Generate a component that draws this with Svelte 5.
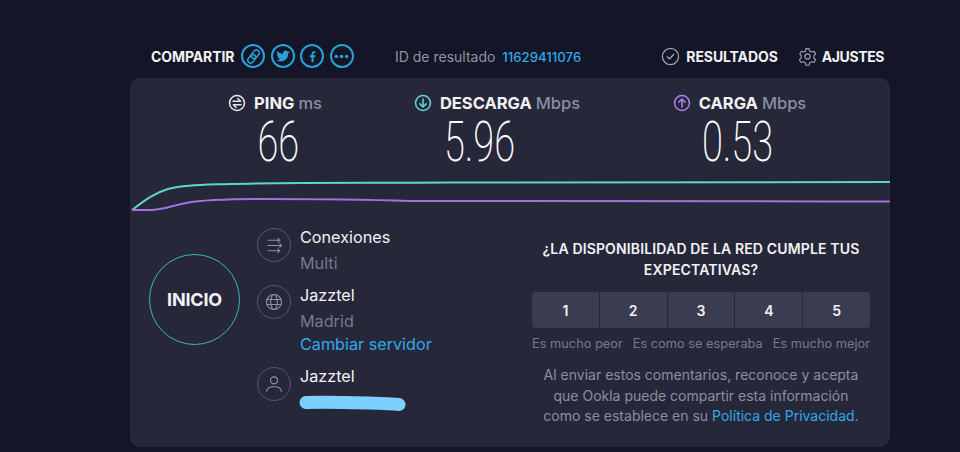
<script>
  const scale = [1, 2, 3, 4, 5];
</script>

<div class="page">
  <header class="top">
    <div class="share">
      <span class="head-label">COMPARTIR</span>
      <span class="round">
        <svg viewBox="0 0 24 24" width="17" height="17" fill="none" stroke="#2a9fd8" stroke-width="2.200">
          <g transform="rotate(-52 12 12)">
            <rect x="1.500" y="8" width="13" height="8" rx="4" />
            <rect x="9.500" y="8" width="13" height="8" rx="4" />
          </g>
        </svg>
      </span>
      <span class="round">
        <svg viewBox="0 0 24 24" width="16" height="16" fill="#2a9fd8">
          <path d="M22 5.900c-.8.300-1.500.500-2.400.600.900-.500 1.500-1.300 1.800-2.300-.800.500-1.700.800-2.600 1a4.100 4.100 0 0 0-7 3.700C8.400 8.700 5.400 7.100 3.400 4.600c-1.100 1.900-.500 4.300 1.300 5.500-.700 0-1.300-.200-1.900-.500 0 2 1.400 3.700 3.300 4.100-.600.200-1.200.200-1.800.100.500 1.600 2 2.800 3.800 2.800A8.300 8.300 0 0 1 2 18.300 11.600 11.600 0 0 0 19.900 8c.800-.600 1.500-1.300 2.100-2.100z" />
        </svg>
      </span>
      <span class="round">
        <svg viewBox="0 0 24 24" width="15" height="15" fill="#2a9fd8">
          <path d="M13.600 21v-8h2.700l.400-3.100h-3.100V8c0-.900.300-1.500 1.600-1.500h1.600V3.700c-.300 0-1.300-.100-2.400-.100-2.400 0-4 1.400-4 4.100v2.200H7.700V13h2.700v8z" />
        </svg>
      </span>
      <span class="round">
        <svg viewBox="0 0 24 24" width="19" height="19" fill="#2a9fd8">
          <circle cx="5.500" cy="12" r="2.300" /><circle cx="12" cy="12" r="2.300" /><circle cx="18.500" cy="12" r="2.300" />
        </svg>
      </span>
    </div>
    <div class="result-id">ID de resultado <a href="#top">11629411076</a></div>
    <div class="head-links">
      <span class="head-link">
        <svg viewBox="0 0 20 20" width="19" height="19" fill="none" stroke="#a0a2b2" stroke-width="1.300">
          <circle cx="10" cy="10" r="8.500" />
          <path d="M6.500 10.300l2.500 2.300 4.500-5" stroke-linecap="round" stroke-linejoin="round" />
        </svg>
        <span class="head-label">RESULTADOS</span>
      </span>
      <span class="head-link settings">
        <svg viewBox="0 0 24 24" width="19" height="19" fill="none" stroke="#a0a2b2" stroke-width="1.400" stroke-linejoin="round">
          <circle cx="12" cy="12" r="3.300" />
          <path d="M10 2h4l.7 3 2.500 1.400 3-.9 2 3.500-2.200 2.100v2.800l2.200 2.100-2 3.500-3-.9-2.500 1.400-.7 3h-4l-.7-3-2.500-1.400-3 .9-2-3.500 2.200-2.100V11L2.300 8.900l2-3.500 3 .9L9.800 5z" />
        </svg>
        <span class="head-label">AJUSTES</span>
      </span>
    </div>
  </header>

  <main class="card">
    <section class="stats">
      <div class="stat ping">
        <div class="stat-title">
          <svg viewBox="0 0 20 20" width="18" height="18" fill="none" stroke="#e4e4ea" stroke-width="1.700" stroke-linecap="round" stroke-linejoin="round">
            <circle cx="10" cy="10" r="8.300" />
            <path d="M5.500 8h8.500L11 5M14.500 12H6l3 3" />
          </svg>
          <b>PING</b> <span>ms</span>
        </div>
        <div class="value"><span>66</span></div>
      </div>
      <div class="stat down">
        <div class="stat-title">
          <svg viewBox="0 0 20 20" width="18" height="18" fill="none" stroke="#5fd8d2" stroke-width="1.700" stroke-linecap="round" stroke-linejoin="round">
            <circle cx="10" cy="10" r="8.300" />
            <path d="M10 5.500v9M6.500 11l3.500 3.500 3.500-3.500" />
          </svg>
          <b>DESCARGA</b> <span>Mbps</span>
        </div>
        <div class="value"><span>5.96</span></div>
      </div>
      <div class="stat up">
        <div class="stat-title">
          <svg viewBox="0 0 20 20" width="18" height="18" fill="none" stroke="#b27fe8" stroke-width="1.700" stroke-linecap="round" stroke-linejoin="round">
            <circle cx="10" cy="10" r="8.300" />
            <path d="M10 14.500v-9M6.500 9L10 5.500 13.500 9" />
          </svg>
          <b>CARGA</b> <span>Mbps</span>
        </div>
        <div class="value"><span>0.53</span></div>
      </div>
    </section>

    <svg class="graph" viewBox="0 0 760 40" preserveAspectRatio="none" width="760" height="40" fill="none" stroke-width="2">
      <path stroke="#5fd3cf" d="M2 33C14 24 24 16 38 12C52 8 70 8 100 7C160 5 240 6 320 5.500C460 5 600 5 760 5" />
      <path stroke="#a76fdd" d="M2 33H20C34 33 40 29 56 26C72 23 90 22 130 22C190 22 220 22 280 24C340 25 560 24 760 24.500" />
    </svg>

    <section class="bottom">
      <div class="start"><span>INICIO</span></div>

      <div class="info">
        <div class="info-row conn">
          <span class="info-icon">
            <svg viewBox="0 0 24 24" width="21" height="21" fill="none" stroke="#8f91a3" stroke-width="1.200">
              <path d="M4 6h14M15.500 3.500L18 6l-2.500 2.500M4 12h16M17.500 9.500L20 12l-2.500 2.500M4 18h14M15.500 15.500L18 18l-2.500 2.500" />
            </svg>
          </span>
          <div class="info-text">
            <div class="line">Conexiones</div>
            <div class="line dim">Multi</div>
          </div>
        </div>
        <div class="info-row server">
          <span class="info-icon">
            <svg viewBox="0 0 24 24" width="20" height="20" fill="none" stroke="#8f91a3" stroke-width="1.300">
              <circle cx="12" cy="12" r="9" />
              <ellipse cx="12" cy="12" rx="4" ry="9" />
              <path d="M3 9h18M3 15h18" />
            </svg>
          </span>
          <div class="info-text">
            <div class="line">Jazztel</div>
            <div class="line dim">Madrid</div>
            <a class="line change" href="#top">Cambiar servidor</a>
          </div>
        </div>
        <div class="info-row isp">
          <span class="info-icon">
            <svg viewBox="0 0 24 24" width="22" height="22" fill="none" stroke="#8f91a3" stroke-width="1.300" stroke-linecap="round">
              <circle cx="12" cy="8" r="3.800" />
              <path d="M4 20c0-3.500 3-5 8-5s8 1.500 8 5" />
            </svg>
          </span>
          <div class="info-text">
            <div class="line">Jazztel</div>
            <div class="line dim masked">
              <svg class="scribble" viewBox="0 0 108 22" width="108" height="22" fill="none" stroke="#7cd0ff" stroke-width="13" stroke-linecap="round">
                <path d="M7 10.500C25 10 50 10.500 70 11C85 11.500 95 12 100 12.500" />
              </svg>
            </div>
          </div>
        </div>
      </div>

      <div class="survey">
        <h2>¿LA DISPONIBILIDAD DE LA RED CUMPLE TUS EXPECTATIVAS?</h2>
        <div class="scale">
          {#each scale as n}
            <button>{n}</button>
          {/each}
        </div>
        <div class="scale-labels">
          <span>Es mucho peor</span>
          <span>Es como se esperaba</span>
          <span>Es mucho mejor</span>
        </div>
        <p>Al enviar estos comentarios, reconoce y acepta que Ookla puede compartir esta información como se establece en su <a href="#top">Política de Privacidad</a>.</p>
      </div>
    </section>
  </main>
</div>

<style>
  :global(body) {
    margin: 0;
    background: #141526;
  }

  .page {
    width: 960px;
    height: 452px;
    overflow: hidden;
    box-sizing: border-box;
    padding: 42px 70px 0 130px;
    font-family: Inter, "Noto Sans", sans-serif;
    color: #f2f2f5;
  }

  a {
    color: #2fa8e8;
    text-decoration: none;
  }

  .top {
    display: flex;
    align-items: center;
    height: 28px;
    margin-bottom: 8px;
    padding-left: 21px;
    padding-right: 6px;
  }

  .share {
    display: flex;
    align-items: center;
    gap: 5.500px;
    width: 244px;
    flex: none;
  }

  .head-label {
    font-size: 14px;
    font-weight: 700;
    letter-spacing: -0.1px;
  }

  .share .head-label {
    margin-right: 1.500px;
  }

  .round {
    width: 24px;
    height: 24px;
    box-sizing: border-box;
    border: 2px solid #2a9fd8;
    border-radius: 50%;
    display: flex;
    align-items: center;
    justify-content: center;
    flex: none;
  }

  .result-id {
    font-size: 14px;
    color: #9193a8;
    white-space: nowrap;
  }

  .result-id a {
    font-size: 13.200px;
    font-weight: 500;
    margin-left: 3px;
  }

  .head-links {
    margin-left: auto;
    display: flex;
    align-items: center;
    gap: 20px;
  }

  .head-link {
    display: flex;
    align-items: center;
    gap: 6px;
  }

  .settings {
    gap: 5px;
  }

  .settings .head-label {
    letter-spacing: -0.4px;
  }

  .card {
    height: 369px;
    background: #26283a;
    border-radius: 10px;
    display: flex;
    flex-direction: column;
  }

  .stats {
    display: flex;
    height: 100px;
    padding: 15px 0 0 60px;
    box-sizing: border-box;
    flex: none;
  }

  .stat {
    display: flex;
    flex-direction: column;
    align-items: center;
    flex: none;
  }

  .ping { width: 170px; }
  .down { width: 214px; margin-left: 30px; }
  .up { width: 219px; margin-left: 26px; }

  .stat-title {
    display: flex;
    align-items: center;
    gap: 4px;
    font-size: 16.500px;
    line-height: 20px;
    white-space: nowrap;
  }

  .stat-title svg {
    margin-right: 4px;
  }

  .stat-title b {
    font-weight: 700;
  }

  .stat-title span {
    color: #8b8da3;
    font-weight: 500;
  }

  .value {
    margin-top: 3px;
    font-family: Roboto, sans-serif;
    font-weight: 200;
    font-size: 55px;
    line-height: 52px;
    color: #fff;
  }

  .value span {
    display: inline-block;
    transform: scaleX(0.69);
  }

  .ping .value { margin-left: 6px; }
  .down .value { margin-right: 34px; }
  .up .value { margin-right: 3px; }

  .graph {
    display: block;
    margin-top: -1px;
    height: 40px;
    flex: none;
  }

  .bottom {
    display: flex;
    padding-left: 19px;
    margin-top: 10px;
  }

  .start {
    width: 91px;
    height: 91px;
    box-sizing: border-box;
    margin-top: 27px;
    border: 1.500px solid #3db5bd;
    border-radius: 50%;
    display: flex;
    align-items: center;
    justify-content: center;
    font-size: 18px;
    font-weight: 700;
    letter-spacing: -0.2px;
    flex: none;
  }

  .info {
    width: 275px;
    margin-left: 17px;
    flex: none;
  }

  .info-row {
    display: flex;
    gap: 9px;
  }

  .info-icon {
    width: 34px;
    height: 34px;
    box-sizing: border-box;
    border: 1.500px solid #55576b;
    border-radius: 50%;
    display: flex;
    align-items: center;
    justify-content: center;
    flex: none;
    margin-top: 1px;
  }

  .info-text {
    display: flex;
    flex-direction: column;
  }

  .line {
    font-size: 16.200px;
    line-height: 20px;
    white-space: nowrap;
  }

  .dim {
    color: #76788e;
    margin-top: 6px;
  }

  .change {
    margin-top: 3px;
    color: #2fa8e8;
  }

  .server { margin-top: 12px; }
  .server .info-icon { margin-top: 0; }
  .isp { margin-top: 12px; }

  .masked {
    height: 20px;
    position: relative;
  }

  .scribble {
    position: absolute;
    left: -1px;
    top: 0;
  }

  .survey {
    width: 338px;
    margin-top: 11px;
    text-align: center;
    flex: none;
  }

  h2 {
    margin: 0 0 12px;
    font-size: 14px;
    line-height: 21px;
    font-weight: 600;
    letter-spacing: 0.15px;
  }

  .scale {
    display: flex;
    height: 36px;
    gap: 1px;
    border-radius: 4px;
    overflow: hidden;
  }

  .scale button {
    flex: 1;
    border: 0;
    padding: 0;
    background: #3a3c51;
    color: #f2f2f5;
    font-family: inherit;
    font-size: 14px;
    font-weight: 600;
  }

  .scale-labels {
    display: flex;
    justify-content: space-between;
    margin-top: 8px;
    font-size: 12.800px;
    line-height: 16px;
    color: #76788e;
    white-space: nowrap;
  }

  p {
    margin: 13px 8px 0;
    font-size: 14px;
    line-height: 20.500px;
    color: #8b8da3;
  }
</style>
